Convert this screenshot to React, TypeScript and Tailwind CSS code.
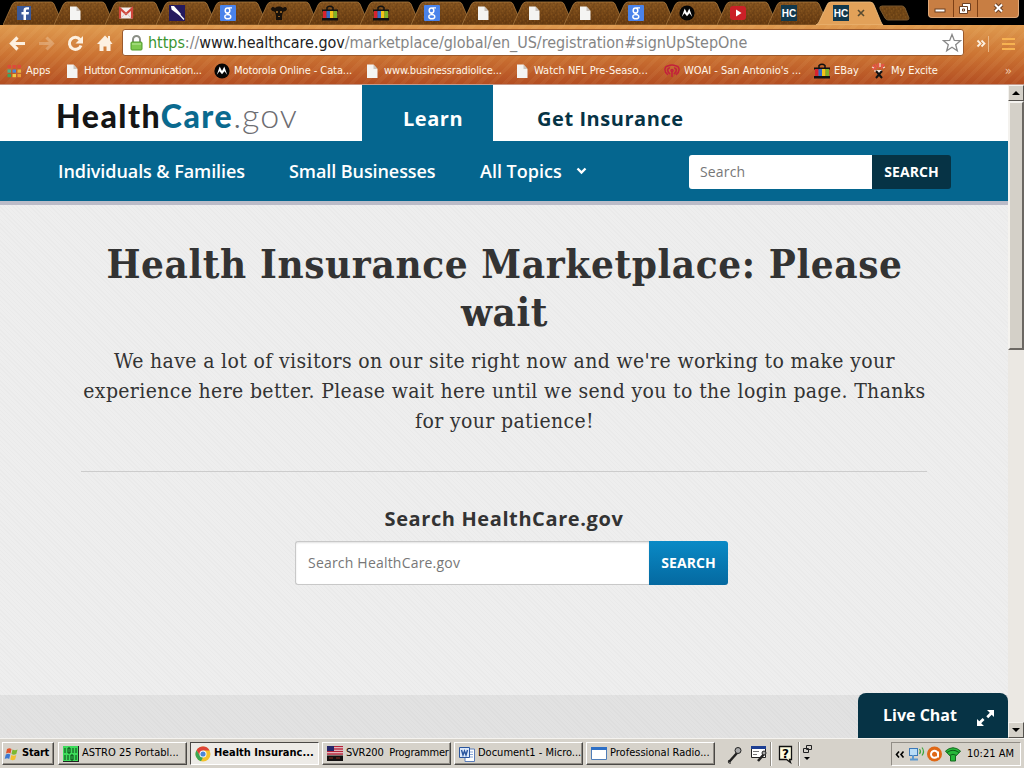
import type { ReactNode } from 'react';

type IconName =
  | 'facebook' | 'page' | 'gmail' | 'feather' | 'google' | 'bull' | 'ebay' | 'motorola'
  | 'youtube' | 'hc' | 'apps' | 'radio' | 'excite' | 'astro' | 'chrome' | 'flag' | 'word' | 'window';

const tabs: IconName[] = [
  'facebook', 'page', 'gmail', 'feather', 'google', 'bull', 'ebay', 'ebay',
  'google', 'page', 'page', 'page', 'google', 'motorola', 'youtube', 'hc',
];

const bookmarks: { icon: IconName; label: string; box: string; text: string }[] = [
  { icon: 'apps', label: 'Apps', box: 'w-[58px]', text: 'tracking-[0px]' },
  { icon: 'page', label: 'Hutton Communication...', box: 'w-[150px]', text: 'tracking-[-0.3px]' },
  { icon: 'motorola', label: 'Motorola Online - Cata...', box: 'w-[150px]', text: 'tracking-[-0.1px]' },
  { icon: 'page', label: 'www.businessradiolice...', box: 'w-[150px]', text: 'tracking-[-0.15px]' },
  { icon: 'page', label: 'Watch NFL Pre-Seaso...', box: 'w-[150px]', text: 'tracking-[0px]' },
  { icon: 'radio', label: "WOAI - San Antonio's ...", box: 'w-[150px]', text: 'tracking-[0px]' },
  { icon: 'ebay', label: 'EBay', box: 'w-[57px]', text: 'tracking-[0px]' },
  { icon: 'excite', label: 'My Excite', box: 'w-[70px]', text: 'tracking-[-0.1px]' },
];

const tasks: { icon: IconName; label: string; active?: boolean }[] = [
  { icon: 'astro', label: 'ASTRO 25 Portabl...' },
  { icon: 'chrome', label: 'Health Insuranc...', active: true },
  { icon: 'flag', label: 'SVR200  Programmer' },
  { icon: 'word', label: 'Document1 - Micro...' },
  { icon: 'window', label: 'Professional Radio...' },
];

const shapes: Record<IconName, ReactNode> = {
  facebook: (
    <>
      <rect x="1" y="1" width="14" height="14" fill="#3b5998" />
      <path d="M10 15V9.500h2.600l.4-2.400h-3V5.800c0-.8.4-1.200 1.300-1.200H13V2.300h-2.200C8.700 2.300 7.500 3.500 7.500 5.500v1.600H5.500v2.400h2V15z" fill="#fff" />
    </>
  ),
  page: (
    <>
      <path d="M3 1.500h6.500L13.500 6v9H3z" fill="#f4f4f2" />
      <path d="M9.500 1.500V6h4z" fill="#c9c3bd" />
    </>
  ),
  gmail: (
    <>
      <rect x="1" y="2.500" width="14" height="11" rx="1" fill="#f3ecea" />
      <path d="M2 13.500V3.500l6 5.500 6-5.500v10" fill="none" stroke="#d0463b" strokeWidth="2.200" />
      <path d="M3.500 12.500L7 8.500M12.500 12.500L9 8.500" stroke="#d9c2bf" />
    </>
  ),
  feather: (
    <>
      <rect width="16" height="16" fill="#251a5e" />
      <path d="M2 1l3 0 7 8-1.500 1.500L2.500 4.500z" fill="#fff" />
      <path d="M10 9l5 5.500" stroke="#fff" strokeWidth="1.200" />
    </>
  ),
  google: (
    <>
      <rect width="16" height="16" rx="1" fill="#4a83ea" />
      <ellipse cx="7.500" cy="5.500" rx="2.300" ry="2.600" fill="none" stroke="#fff" strokeWidth="1.500" />
      <ellipse cx="7.800" cy="11.700" rx="3" ry="2.100" fill="none" stroke="#fff" strokeWidth="1.400" />
      <path d="M8.500 2.800H12M7 8l2.500 2" stroke="#fff" strokeWidth="1.200" />
    </>
  ),
  bull: (
    <>
      <path d="M0 4c1-3 3-2 4-1 2-2 6-2 8 0 1-1 3-2 4 1-1 3-3 2-4 3l-1 4v4H5v-4L4 7C3 6 1 7 0 4z" fill="#17100a" />
      <path d="M5 6h2v2H5zM9 6h2v2H9zM7 11h2v1H7z" fill="#8b5a20" />
    </>
  ),
  ebay: (
    <>
      <path d="M5 5V2.500Q8 0 11 2.500V5" fill="none" stroke="#111" strokeWidth="1.500" />
      <path d="M0 4.500h16v2H0zM0 13h16v2.500H0z" fill="#111" />
      <path d="M1 6h3.500v7H1z" fill="#d8232e" />
      <path d="M4.500 6H8v7H4.500z" fill="#3469c6" />
      <path d="M8 6h3.500v7H8z" fill="#f2c418" />
      <path d="M11.500 6H15v7h-3.500z" fill="#7eb32a" />
    </>
  ),
  motorola: (
    <>
      <circle cx="8" cy="8" r="7.600" fill="#050505" />
      <path d="M2.800 11.800L5.700 3.500 8 8l2.300-4.500 2.900 8.300-2.700-3.500L8 11.200 5.500 8.300z" fill="#fff" />
    </>
  ),
  youtube: (
    <>
      <rect y="1" width="16" height="14" rx="3" fill="#cb2027" />
      <path d="M6 4.500v7L11.500 8z" fill="#fff" />
    </>
  ),
  hc: (
    <>
      <rect width="16" height="16" fill="#12394d" />
      <text x="8" y="12" textAnchor="middle" fill="#fff" fontSize="10" fontWeight="700" fontFamily="Liberation Sans">HC</text>
    </>
  ),
  apps: (
    <>
      {['#dd4b39', '#dd4b39', '#dd4b39', '#4db08c', '#4a87d8', '#e8b43c', '#43a25c', '#f2c843', '#ee9c33'].map((c, i) => (
        <rect key={i} x={1.500 + (i % 3) * 5} y={2 + Math.floor(i / 3) * 4.500} width="3.500" height="3.200" fill={c} />
      ))}
    </>
  ),
  radio: (
    <g fill="none" stroke="#c3203c" strokeWidth="1.500">
      <path d="M4 12C-1 8 1 3 4 3M6 11C2 8 4 4.500 6 5M12 12c5-4 3-9 0-9M10 11c4-3 2-6.500 0-6" />
      <circle cx="8" cy="7.500" r="1" />
      <path d="M8 9v5M4 3q4-2 8 0" />
    </g>
  ),
  excite: (
    <>
      <path d="M5 7h6l-1 4H6z" fill="#f6e8df" />
      <path d="M5 8l6 7M11 8l-6 7" stroke="#111" strokeWidth="2" />
      <path d="M2 2l3 4M7 0l1 5M13 1l-3 5M1 6h3M4 1l2 3M11 1v3" stroke="#e8534a" strokeWidth="1.400" />
      <path d="M1 4l2 1M9 0v4M14 4l-2 1M3 8h2" stroke="#f8dcd2" strokeWidth="1.200" />
    </>
  ),
  astro: (
    <>
      <rect width="16" height="16" fill="#3ddc5b" />
      <path d="M2 2v5M5 2h2v5H5zM10 2v5M13 2v5M2 9v5M5 9v5M8 9h2v5H8zM13 9v5" stroke="#0b3d14" fill="none" />
      <path d="M0 15.500h16M15.500 0v16" stroke="#222" />
    </>
  ),
  chrome: (
    <>
      <circle cx="8" cy="8" r="7.500" fill="#f4c22c" />
      <path d="M1.500 4.200A7.500 7.500 0 0 1 14.700 4.600H8L4.900 9.600z" fill="#dd4437" />
      <path d="M1.500 4.200L5 9.800l3 1.400-2 4A7.500 7.500 0 0 1 1.500 4.200z" fill="#3aa655" />
      <circle cx="8" cy="8" r="3.500" fill="#fff" />
      <circle cx="8" cy="8" r="2.600" fill="#4a86d8" />
    </>
  ),
  flag: (
    <>
      <path d="M0 0h16v8H0z" fill="#f1e9e9" />
      <path d="M0 .5h16M0 3h16M0 5.500h16M0 8h16" stroke="#b5233a" strokeWidth="1.300" />
      <path d="M0 0h7v5H0z" fill="#26276b" />
      <path d="M0 9.500h16V15H0z" fill="#121010" />
      <path d="M2 12h4M9 12h4" stroke="#8a2a20" />
    </>
  ),
  word: (
    <>
      <path d="M6 3h9.500v12.500H6z" fill="#fff" stroke="#5a7cb8" />
      <path d="M9 6h5M9 8.500h5M9 11h5" stroke="#86a3d4" />
      <path d="M.5 1.500h10v10H.5z" fill="#dce8fa" stroke="#2a569f" />
      <path d="M2.500 4l1.500 5 1.500-4L7 9l1.500-5" fill="none" stroke="#2a569f" strokeWidth="1.400" />
    </>
  ),
  window: (
    <>
      <path d="M.5 1.500h15v12H.5z" fill="#fff" stroke="#4e7db8" />
      <path d="M0 1h16v3H0z" fill="#2d6fc6" />
    </>
  ),
};

function Icon({ name, size = 16 }: { name: IconName; size?: number }) {
  return (
    <svg width={size} height={size} viewBox="0 0 16 16" className="relative shrink-0">
      {shapes[name]}
    </svg>
  );
}

function TabStrip() {
  return (
    <div className="relative flex h-[25px] bg-black pl-[3px]">
      {tabs.map((icon, i) => (
        <div key={i} className="relative w-[51px] shrink-0">
          <svg width="60" height="25" className="absolute left-0 top-0">
            <defs>
              <linearGradient id="tabFill" x1="0" y1="0" x2="0" y2="1">
                <stop offset="0" stopColor="#85541f" />
                <stop offset="1" stopColor="#663a10" />
              </linearGradient>
              <pattern id="grain" width="7" height="6" patternUnits="userSpaceOnUse">
                <path d="M0 1h2M4 0h1M5 3h2M2 4h1M1 5h1" stroke="#3d210b" strokeOpacity=".3" />
                <path d="M3 2h1M0 3h1M5 5h1" stroke="#b67a34" strokeOpacity=".3" />
              </pattern>
            </defs>
            <path d="M0 25L9 5q1.500-3 4-3h35q2 0 3 2l9 21z" fill="url(#tabFill)" />
            <path d="M0 25L9 5q1.500-3 4-3h35q2 0 3 2l9 21z" fill="url(#grain)" stroke="#a6763d" strokeWidth=".8" />
          </svg>
          <div className="relative pl-[13px] pt-[5px]">
            <Icon name={icon} />
          </div>
        </div>
      ))}
      <div className="relative w-[60px] shrink-0">
        <svg width="68" height="25" className="absolute left-[-3px] top-0">
          <path d="M0 25q2-1 3-3l8-17q1-3 4-3h39q3 0 4 3l7 17q1 2 2 3z" fill="#e2a159" stroke="#f0c083" strokeWidth=".8" />
        </svg>
        <div className="relative flex items-start pl-[14px] pt-[5px]">
          <Icon name="hc" />
          <svg width="8" height="8" className="ml-[8px] mt-[4px]">
            <path d="M1 1l6 6M7 1L1 7" stroke="#584a30" strokeWidth="1.600" />
          </svg>
        </div>
      </div>
      <svg width="32" height="25" className="shrink-0">
        <path d="M1 9q-1-3 2-3h20q2 0 3 2l4 10q0 2-2 2H9q-2 0-3-2z" fill="#724716" />
        <path d="M1 9q-1-3 2-3h20q2 0 3 2l4 10q0 2-2 2H9q-2 0-3-2z" fill="url(#grain)" stroke="#76552d" />
      </svg>
      <div className="ml-auto mr-[5px] flex h-[18px] overflow-hidden rounded-b border border-t-0 border-[#e0a878] bg-[#c87e43]">
        <svg width="89" height="17">
          <path d="M24.500 0v17M48.500 0v17" stroke="#7d4016" />
          <rect x="6" y="9" width="10" height="3" fill="#fff" stroke="#6c4023" />
          <g fill="#fff" stroke="#6c4023">
            <path d="M33.500 3.500h8v7h-8z" />
            <path d="M30.500 6.500h8v7h-8z" />
            <path d="M33.500 9h2v2h-2z" />
          </g>
          <path d="M66 4.500l7 7M73 4.500l-7 7" stroke="#6c4023" strokeWidth="4" />
          <path d="M66 4.500l7 7M73 4.500l-7 7" stroke="#fff" strokeWidth="2" />
        </svg>
      </div>
    </div>
  );
}

function AddressBar() {
  return (
    <div className="flex h-[35px] items-center">
      <svg width="122" height="34" className="shrink-0" fill="none" stroke="#fdf0e0">
        <path d="M25 17.500H12M17.500 11.500l-6 6 6 6" strokeWidth="3.200" />
        <path d="M39 17.500h13M46.500 11.500l6 6-6 6" strokeWidth="3" strokeOpacity=".28" />
        <path d="M80 13.500a6 6 0 1 0 1 6" strokeWidth="3" />
        <path d="M83 10v7.500h-7.500z" fill="#fdf0e0" stroke="none" />
        <path d="M97 18l8-8.500 3 3V10h2v4.500l2.500 3.500h-2v7h-4v-4.500h-3V25h-4v-7z" fill="#fdf0e0" stroke="none" />
      </svg>
      <div className="flex h-[27px] w-[842px] items-center rounded-[3px] border border-[#9b5a2c] bg-white pl-[7px]">
        <svg width="13" height="16">
          <path d="M3 8V4.500a3.500 3.500 0 0 1 7 0V8" fill="none" stroke="#8b8f86" strokeWidth="2" />
          <rect x="1" y="7" width="11" height="8" rx="1" fill="#7fc850" stroke="#4f9a2a" />
          <path d="M2 9h9" stroke="#c0e8a0" />
        </svg>
        <div className="ml-[5px] w-[780px] whitespace-nowrap font-['DejaVu_Sans_Condensed','DejaVu_Sans',sans-serif] text-[16px] tracking-[-0.04px] text-[#858585]">
          <span className="text-[#3a9430]">https</span>://<span className="text-[#222]">www.healthcare.gov</span>/marketplace/global/en_US/registration#signUpStepOne
        </div>
        <svg width="20" height="20" className="ml-auto mr-px shrink-0">
          <path d="M10 1.500l2.300 5.900 6.200.3-4.800 4 1.600 6.100L10 14.300l-5.300 3.500 1.600-6.100-4.800-4 6.200-.3z" fill="#fff" stroke="#888" strokeWidth="1.300" />
        </svg>
      </div>
      <svg width="60" height="34" className="shrink-0" fill="none">
        <path d="M13.500 14.500l3 3-3 3M17.500 14.500l3 3-3 3" stroke="#fdf0e0" strokeWidth="1.800" />
        <path d="M24.500 10v16" stroke="#eab988" />
        <path d="M38 13h13M38 18h13M38 23h13" stroke="#f7b251" strokeWidth="2" />
      </svg>
    </div>
  );
}

function BookmarksBar() {
  return (
    <div className="flex h-[22px] items-center pl-[6px] font-['DejaVu_Sans_Condensed','DejaVu_Sans',sans-serif] text-[11px] text-[#fff6ea]">
      {bookmarks.map((b, i) => (
        <div key={i} className={`flex shrink-0 items-center gap-[4px] whitespace-nowrap ${b.box}`}>
          <Icon name={b.icon} />
          <span className={b.text}>{b.label}</span>
        </div>
      ))}
      <span className="ml-auto mr-[12px] text-[13px] text-[#f0c8a8]">»</span>
    </div>
  );
}

function SiteHeader() {
  return (
    <>
      <div className="flex h-[56px] bg-white font-['Open_Sans',sans-serif] text-[20px] font-bold tracking-[0.55px]">
        <div className="w-[362px] whitespace-nowrap pl-[56px] pt-[11px] font-[Lato,sans-serif] text-[32px] leading-[38px] tracking-[1.5px]">
          <span className="font-black text-[#151515]">Health</span>
          <span className="font-black text-[#0a6a8f]">Care</span>
          <span className="text-[34px] font-light tracking-[1px] text-[#6d6d72]">.gov</span>
        </div>
        <div className="w-[131px] bg-[#05668f] pl-[41px] pt-[20px] leading-[28px] text-white">Learn</div>
        <div className="pl-[44px] pt-[20px] leading-[28px] text-[#063345]">Get Insurance</div>
      </div>
      <div className="flex h-[64px] items-center border-b-4 border-[#bbbcc8] bg-[#05668f] pl-[58px] font-['Open_Sans',sans-serif] text-[18px] font-semibold text-white">
        <div className="w-[231px] tracking-[-0.08px]">Individuals &amp; Families</div>
        <div className="w-[191px] tracking-[-0.08px]">Small Businesses</div>
        <div className="flex w-[209px] items-center gap-[14px]">
          All Topics
          <svg width="11" height="8">
            <path d="M1.500 1.500l4 4 4-4" fill="none" stroke="#fff" strokeWidth="2.400" />
          </svg>
        </div>
        <div className="mt-[2px] flex h-[34px] overflow-hidden rounded-[3px] text-[14px]">
          <div className="w-[183px] bg-white pl-[11px] font-normal leading-[34px] tracking-[0.15px] text-[#777]">Search</div>
          <div className="w-[79px] bg-[#063345] text-center font-bold leading-[34px] tracking-[0.1px]">SEARCH</div>
        </div>
      </div>
    </>
  );
}

function WaitMessage() {
  return (
    <div className="h-[490px] bg-[#eee] bg-[repeating-linear-gradient(45deg,#eaeaea_0_1px,transparent_1px_3px)] pt-[35px] text-[#333]">
      <div className="mx-auto w-[846px] pl-px text-center">
        <h1 className="whitespace-nowrap font-['DejaVu_Serif_Condensed','DejaVu_Serif',serif] text-[40px] font-bold leading-[48px] tracking-[0.62px]">
          Health Insurance Marketplace: Please
          <br />
          wait
        </h1>
        <p className="mt-[10px] whitespace-nowrap font-['DejaVu_Serif_Condensed','DejaVu_Serif',serif] text-[21px] leading-[30px] tracking-[0.36px]">
          We have a lot of visitors on our site right now and we're working to make your
          <br />
          experience here better. Please wait here until we send you to the login page. Thanks
          <br />
          for your patience!
        </p>
      </div>
      <div className="ml-[81px] mt-[35px] w-[846px] border-t border-[#ccc]" />
      <div className="font-['Open_Sans',sans-serif]">
        <h2 className="mt-[32px] text-center text-[20px] font-bold leading-[30px] tracking-[0.6px]">Search HealthCare.gov</h2>
        <div className="ml-[295px] mt-[7px] flex h-[44px] w-[433px] text-[14px]">
          <div className="w-[354px] rounded-l-[3px] border border-r-0 border-[#c8c8c8] bg-white pl-[12px] leading-[42px] tracking-[0.2px] text-[#777] shadow-[inset_0_1px_2px_rgba(0,0,0,0.12)]">
            Search HealthCare.gov
          </div>
          <div className="w-[79px] rounded-r-[3px] bg-linear-to-b from-[#0a8ac6] to-[#0569a0] text-center font-bold leading-[44px] tracking-[0.1px] text-white">SEARCH</div>
        </div>
      </div>
    </div>
  );
}

function ScrollBar() {
  const button = 'flex h-[16px] items-center justify-center border border-t-[#f4f2ee] border-l-[#f4f2ee] border-r-[#55524e] border-b-[#55524e] bg-[#d4d0c8]';
  return (
    <div className="flex w-[16px] flex-col bg-[#ebe8e3]">
      <div className={button}>
        <svg width="8" height="4"><path d="M4 0l4 4H0z" fill="#000" /></svg>
      </div>
      <div className="h-[249px] border-2 border-t-[#f4f2ee] border-l-[#f4f2ee] border-r-[#6b6762] border-b-[#6b6762] bg-[#d4d0c8]" />
      <div className="flex-1" />
      <div className={button}>
        <svg width="8" height="4"><path d="M0 0h8L4 4z" fill="#000" /></svg>
      </div>
    </div>
  );
}

function TaskBar() {
  const raised = 'border border-t-white border-l-white border-r-[#4a4845] border-b-[#4a4845] shadow-[inset_-1px_-1px_0_#918d86]';
  return (
    <div className="flex h-[30px] items-start border-t border-[#f5f3ef] bg-[#d6d2ca] pt-[3px] font-['DejaVu_Sans_Condensed','DejaVu_Sans',sans-serif] text-[11px] text-black">
      <div className={`ml-[2px] mr-[4px] flex h-[23px] w-[52px] items-center gap-[2px] font-bold tracking-[-0.2px] ${raised}`}>
        <svg width="16" height="16" viewBox="0 0 16 16" className="ml-px shrink-0">
          <path d="M3 3q2.500-1.500 4.500 0L6.500 7.500Q4.500 6 2 7.500z" fill="#e0532c" />
          <path d="M8.500 3.500q2.500 1.500 5 0l-1.200 4.500q-2.500 1.500-4.800 0z" fill="#7cb82f" />
          <path d="M1.800 8.500q2.500-1.500 4.500 0L5.200 13Q3.200 11.500.7 13z" fill="#3c78d0" />
          <path d="M7.300 9q2.500 1.500 5 0l-1.200 4.500q-2.500 1.500-4.800 0z" fill="#f2c02e" />
        </svg>
        Start
      </div>
      {tasks.map((t) => (
        <div
          key={t.label}
          className={`mr-[3px] flex h-[23px] w-[129px] shrink-0 items-center gap-[3px] whitespace-pre pl-[4px] ${
            t.active
              ? 'border border-t-[#4a4845] border-l-[#4a4845] border-b-white border-r-white bg-[#edebe7] font-bold tracking-[0px]'
              : raised
          }`}
        >
          <Icon name={t.icon} />
          <span className={t.icon === 'flag' ? 'tracking-[-0.22px]' : undefined}>{t.label}</span>
        </div>
      ))}
      <svg width="106" height="24" className="ml-[7px] shrink-0">
        <path d="M4 20l8-9" stroke="#222" strokeWidth="2.500" />
        <path d="M6 21q-4 1-2-3" fill="none" stroke="#222" />
        <circle cx="13" cy="8.500" r="3" fill="#aaa" stroke="#222" />
        <path d="M26.500 4.500h14v11h-14z" fill="#fff" stroke="#222" />
        <path d="M26 4h15v3H26z" fill="#1d3f93" />
        <path d="M28 9.500h6M28 12.500h4" stroke="#777" />
        <path d="M33 19l6-7" stroke="#222" strokeWidth="2.500" />
        <circle cx="39" cy="11" r="2" fill="#aaa" stroke="#222" />
        <path d="M45.500 0v24M73.500 0v24" stroke="#918d86" />
        <path d="M46.500 0v24M74.500 0v24" stroke="#fff" />
        <path d="M54.500 4.500h12v13h-2l1 3-4-3h-7z" fill="#fffde0" stroke="#111" strokeWidth="1.300" />
        <text x="57" y="15.500" fontSize="12" fontWeight="700" fontFamily="DejaVu Sans">?</text>
        <path d="M81.500 3.500h5v4h-5zM78.500 6.500h5v4h-5z" fill="#d6d2ca" stroke="#222" />
        <path d="M79 15h6l-3 3z" fill="#000" />
      </svg>
      <div className="ml-auto mr-[3px] flex h-[24px] w-[130px] items-center whitespace-nowrap border border-t-[#918d86] border-l-[#918d86] border-b-white border-r-white">
        <svg width="72" height="22" className="mr-[3px] shrink-0" fill="none">
          <path d="M7 8.500l-2.500 3 2.500 3M11.500 8.500l-2.500 3 2.500 3" stroke="#000" strokeWidth="1.600" />
          <rect x="17.500" y="5.500" width="8" height="7" fill="#b9dcf7" stroke="#3b78b8" />
          <path d="M18 16.500h8M21 12v5" stroke="#5b98d0" strokeWidth="2" />
          <path d="M27.500 6q2 2.500 0 5M30 4.500q3 4 0 8" stroke="#3ea53e" strokeWidth="1.200" />
          <circle cx="42.500" cy="11" r="7.500" fill="#df6816" />
          <path d="M46 14.500V8.500M46 11a3.500 3.500 0 1 0-1 2.800" stroke="#fff" strokeWidth="2" />
          <path d="M53.500 8q7.500-6.500 15 0l-2 2.500-3 2.500v5h-5v-5l-3-2.500z" fill="#28b83a" stroke="#126a1e" />
          <path d="M55 9.500q6-4.500 12 0M57.500 12.500q3.500-2.500 7 0" stroke="#0d5d18" />
        </svg>
        10:21 AM
      </div>
    </div>
  );
}

export default function App() {
  return (
    <div className="flex h-[768px] w-[1024px] flex-col overflow-hidden">
      <TabStrip />
      <div className="h-[60px] border-b border-[#c69a8b] bg-[repeating-linear-gradient(135deg,rgba(255,220,160,0.06)_0_4px,transparent_4px_9px),linear-gradient(#df9a4f,#cc7433_50%,#b34e22)]">
        <AddressBar />
        <BookmarksBar />
      </div>
      <div className="flex h-[653px]">
        <div className="relative w-[1008px]">
          <SiteHeader />
          <WaitMessage />
          <div className="h-[43px] bg-[#e2e2e2] bg-[repeating-linear-gradient(45deg,#dedede_0_1px,transparent_1px_3px)]" />
          <div className="absolute bottom-0 right-0 flex h-[45px] w-[150px] items-center rounded-t-[8px] bg-[#063345] pl-[25px] font-['Open_Sans',sans-serif] text-[16px] font-bold text-white">
            <span className="mb-[2px] w-[93px]">Live Chat</span>
            <svg width="19" height="18" className="mt-[4px]">
              <path d="M11 1h7v7l-2.300-2.300-3.500 3.500-1.900-1.900 3.500-3.500zM8 17H1v-7l2.300 2.300 3.300-3.300 1.900 1.900-3.300 3.300z" fill="#fff" />
            </svg>
          </div>
        </div>
        <ScrollBar />
      </div>
      <TaskBar />
    </div>
  );
}
